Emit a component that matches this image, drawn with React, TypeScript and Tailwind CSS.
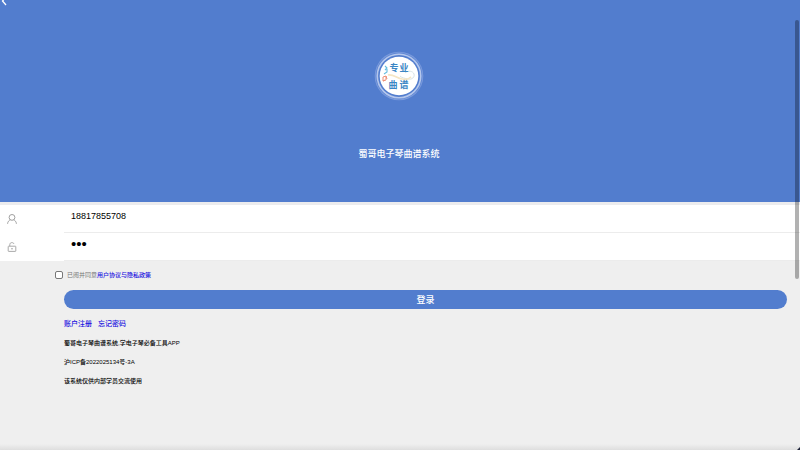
import { useState } from "react";

const Logo = () => (
  <svg viewBox="0 0 50 50" className="size-[50px]" aria-hidden="true">
    <circle cx="25" cy="25" r="24.3" fill="#7b9bdc" />
    <circle cx="25" cy="25" r="23.4" fill="#6289d5" />
    <circle cx="25" cy="25" r="21.7" fill="#527dce" stroke="#b5c7ec" strokeWidth="1.6" />
    <circle cx="25" cy="25" r="19.3" fill="#fff" />
    <path
      d="M31 22c3-3 8-2 9 1s-2 6-6 5-6-1-8-3"
      fill="none"
      stroke="#d3dfe2"
      strokeWidth="0.9"
    />
    <path d="M14 24c5-1 9 3 14 4s6 0 9-2" fill="none" stroke="#f6e6c4" strokeWidth="1.6" />
    <path d="M11 15l2 2-2 2M13 18v3l-3 2" fill="none" stroke="#63bde0" strokeWidth="1.1" />
    <path d="M9 26l3-1v4l-3 1zM12 25l1 3M9 30l2-1" fill="none" stroke="#ec8f76" strokeWidth="1" />
    <g
      fill="#3a86c4"
      fontSize="9"
      fontWeight="700"
      textAnchor="middle"
      fontFamily="'Noto Sans CJK SC', sans-serif"
    >
      <text x="20" y="20">专</text>
      <text x="30" y="20">业</text>
      <text x="19" y="37">曲</text>
      <text x="30" y="37">谱</text>
    </g>
  </svg>
);

const UserIcon = () => (
  <svg viewBox="0 0 10 10" className="size-2.5" fill="none" stroke="#a0a0a0" strokeWidth="1">
    <circle cx="5" cy="3.4" r="2.9" />
    <path d="M0.6 9.8C0.7 7.6 2 6.4 3.4 5.8M6.6 5.8C8 6.4 9.3 7.6 9.4 9.8" />
  </svg>
);

const LockIcon = () => (
  <svg viewBox="0 0 10 10" className="size-2.5" fill="none" stroke="#a0a0a0" strokeWidth="0.9">
    <rect x="1.2" y="4.2" width="7.6" height="5.2" rx="0.5" />
    <path d="M2.8 4.2V2.6C2.8 0.1 6.4 0 7 2M4 6.8h2" />
  </svg>
);

const App = () => {
  const [phone, setPhone] = useState<string>("18817855708");
  const [password, setPassword] = useState<string>("123");
  const [agreed, setAgreed] = useState<boolean>(false);

  return (
    <div className="relative flex flex-col min-h-screen bg-[#efefef] text-black font-['Liberation_Sans','Noto_Sans_CJK_SC',sans-serif]">
      {/* HEADER */}
      <header className="relative flex flex-col items-center overflow-hidden bg-[#527dce] pt-[51px] pr-0.5 pb-[42px] text-white">
        <button type="button" aria-label="返回" className="absolute left-px -top-1">
          <svg viewBox="0 0 6 10" className="w-1.5 h-2.5" fill="none" stroke="#fff" strokeWidth="1.3">
            <path d="M5 1L1.5 5L5 9" />
          </svg>
        </button>
        <Logo />
        <h1 className="mt-[47px] text-[9px] leading-3 font-medium">蜀哥电子琴曲谱系统</h1>
      </header>

      {/* LOGIN FORM */}
      <form onSubmit={(e) => e.preventDefault()}>
        <div className="border-t-3 border-[#ececee] bg-white">
          <div className="flex items-center h-7">
            <label htmlFor="phone" aria-label="手机号" className="w-16 pl-[7px]">
              <UserIcon />
            </label>
            <div className="flex flex-1 h-full border-b border-[#ececec] pl-[7px] pb-1">
              <input
                id="phone"
                type="text"
                value={phone}
                onChange={(e) => setPhone(e.target.value)}
                className="w-full text-[9px] outline-none"
              />
            </div>
          </div>
          <div className="flex items-center h-7">
            <label htmlFor="password" aria-label="密码" className="w-16 pl-[7px]">
              <LockIcon />
            </label>
            <div className="flex flex-1 h-full border-b border-[#ececec] pl-[7px] pb-1">
              <input
                id="password"
                type="password"
                value={password}
                onChange={(e) => setPassword(e.target.value)}
                className="w-full text-[15px] outline-none"
              />
            </div>
          </div>
        </div>

        <div className="flex items-center gap-1 pt-2.5 pl-[55px] text-[6px] leading-2 text-[#777]">
          <input
            id="agree"
            type="checkbox"
            checked={agreed}
            onChange={(e) => setAgreed(e.target.checked)}
            className="size-2 appearance-none rounded-xs border border-[#777] bg-white checked:bg-[#527dce]"
          />
          <div>
            <label htmlFor="agree">已阅并同意</label>
            <a href="#agreement" className="font-medium text-[#1a12e0]">
              用户协议与隐私政策
            </a>
          </div>
        </div>

        <div className="pt-[11px] pl-16 pr-[13px]">
          <button
            type="submit"
            className="block w-full h-[19px] rounded-full bg-[#527dce] text-[9px] leading-3 font-medium text-white"
          >
            登录
          </button>
        </div>
      </form>

      {/* LINKS */}
      <nav className="flex gap-1.5 pt-2.5 pl-16 text-[7px] leading-2.5 font-medium text-[#1a12e0]">
        <a href="#register">账户注册</a>
        <a href="#forgot">忘记密码</a>
      </nav>

      {/* FOOTER */}
      <footer className="flex flex-col gap-[11px] pt-2.5 pl-16 text-[6px] leading-2 font-medium">
        <p>蜀哥电子琴曲谱系统,学电子琴必备工具APP</p>
        <p>沪ICP备2022025134号-3A</p>
        <p>该系统仅供内部学员交流使用</p>
      </footer>

      <div className="mt-auto h-1.5 bg-linear-to-b from-[#efefef] to-[#dedede]" />

      {/* SCROLLBAR */}
      <div className="absolute top-5 right-px w-1 h-[259px] rounded-full bg-black/30" />
      {/* WINDOW CORNER */}
      <svg viewBox="0 0 3 3" className="absolute right-0 bottom-0 size-[3px]" aria-hidden="true">
        <path d="M3 0V3H0Z" fill="#1d2238" />
      </svg>
    </div>
  );
};

export default App;
